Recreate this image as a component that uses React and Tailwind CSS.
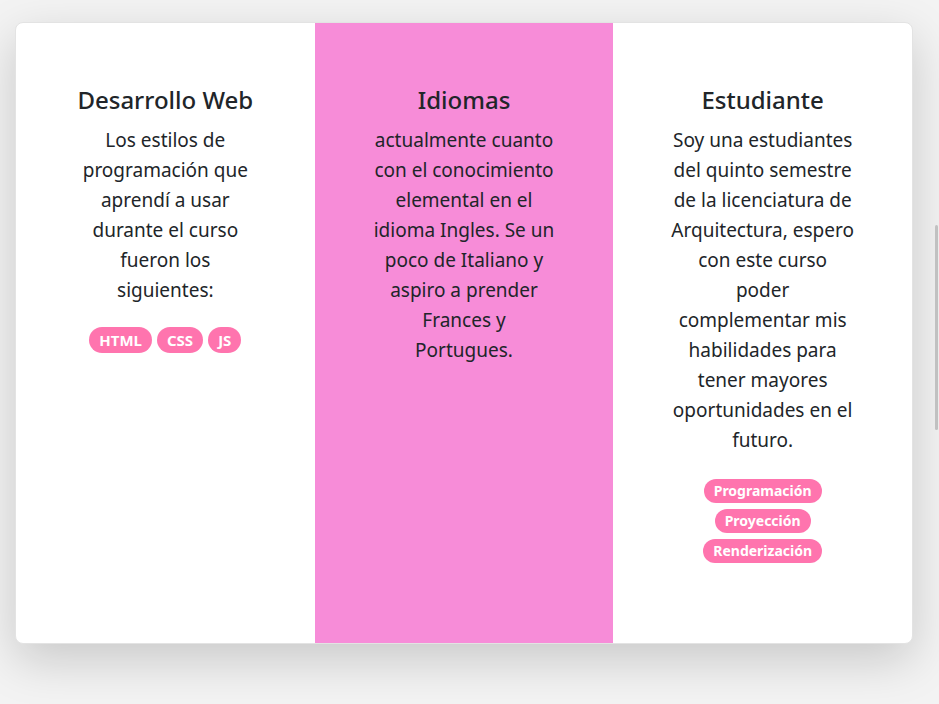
const Lines = ({ lines }) => (
  <p className="text-[19px] leading-[30px]">
    {lines.map((l, i) => (
      <span key={i} className="block whitespace-nowrap">{l}</span>
    ))}
  </p>
);

export default function App() {
  const font = { fontFamily: '"Noto Sans", "Open Sans", sans-serif' };
  return (
    <div className="min-h-[704px] bg-[#f3f3f3] pl-[15px] pt-[22px]" style={font}>
      <div className="grid w-[898px] grid-cols-3 overflow-hidden rounded-lg border border-[#e3e3e3] bg-white text-center text-[#212529] shadow-[0_1rem_3rem_rgba(0,0,0,0.175)]">
        <div className="flex flex-col items-center px-[40px] pt-[62px] pb-[80px]">
          <h4 className="mb-[11px] text-[24px] font-medium leading-[29px]">Desarrollo Web</h4>
          <Lines lines={["Los estilos de", "programación que", "aprendí a usar", "durante el curso", "fueron los", "siguientes:"]} />
          <div className="mt-[22px] flex gap-[5px]">
            <span className="rounded-full bg-[#ff74ae] px-[10px] py-[3px] text-[15px] font-bold leading-[20px] text-white">HTML</span>
            <span className="rounded-full bg-[#ff74ae] px-[10px] py-[3px] text-[15px] font-bold leading-[20px] text-white">CSS</span>
            <span className="rounded-full bg-[#ff74ae] px-[10px] py-[3px] text-[15px] font-bold leading-[20px] text-white">JS</span>
          </div>
        </div>
        <div className="flex flex-col items-center bg-[#f78cd8] px-[40px] pt-[62px] pb-[80px]">
          <h4 className="mb-[11px] text-[24px] font-medium leading-[29px]">Idiomas</h4>
          <Lines lines={["actualmente cuanto", "con el conocimiento", "elemental en el", "idioma Ingles. Se un", "poco de Italiano y", "aspiro a prender", "Frances y", "Portugues."]} />
        </div>
        <div className="flex flex-col items-center px-[40px] pt-[62px] pb-[80px]">
          <h4 className="mb-[11px] text-[24px] font-medium leading-[29px]">Estudiante</h4>
          <Lines lines={["Soy una estudiantes", "del quinto semestre", "de la licenciatura de", "Arquitectura, espero", "con este curso", "poder", "complementar mis", "habilidades para", "tener mayores", "oportunidades en el", "futuro."]} />
          <div className="mt-[24px] flex flex-col items-center gap-[6px]">
            <span className="rounded-full bg-[#ff74ae] px-[10px] py-[2px] text-[14px] font-bold leading-[20px] text-white">Programación</span>
            <span className="rounded-full bg-[#ff74ae] px-[10px] py-[2px] text-[14px] font-bold leading-[20px] text-white">Proyección</span>
            <span className="rounded-full bg-[#ff74ae] px-[10px] py-[2px] text-[14px] font-bold leading-[20px] text-white">Renderización</span>
          </div>
        </div>
      </div>
      <div className="fixed right-[1px] top-[225px] h-[205px] w-[3px] rounded-full bg-[#c1c1c1]" />
    </div>
  );
}
